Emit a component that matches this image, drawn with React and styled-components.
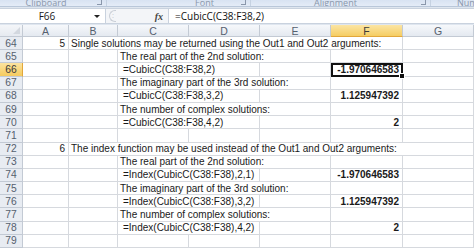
import React from 'react';
import styled, { createGlobalStyle } from 'styled-components';

const GlobalStyle = createGlobalStyle`
    html, body {
        margin: 0;
        padding: 0;
        background: #ffffff;
        overflow: hidden;
    }
    body {
        font-family: "Liberation Sans", Arial, sans-serif;
    }
`;

const GRID = '#d6d9de';
const HEAD_LINE = '#c3cad4';

const Window = styled.div`
    width: 474px;
    height: 248px;
    overflow: hidden;
    display: flex;
    flex-direction: column;
    background: #dfe6ef;
`;

const RibbonLabels = styled.div`
    display: flex;
    height: 8px;
    overflow: hidden;
    background: linear-gradient(#d8e3f2, #e4ecf7);
    border-bottom: 1px solid #b9c7d9;
`;

const Group = styled.div`
    position: relative;
    width: ${(props) => props.$width}px;
    flex: none;
    border-right: 1px solid #c6d2e2;
    box-sizing: border-box;
    text-align: ${(props) => (props.$left ? 'left' : 'center')};
    font-family: "Open Sans", "Liberation Sans", sans-serif;
    font-size: 9px;
    line-height: 9px;
    color: #8a97ab;
`;

const GroupLabel = styled.span`
    display: block;
    margin-top: -2px;
    position: relative;
    left: ${(props) => props.$shift || 0}px;
`;

const Launcher = styled.span`
    position: absolute;
    right: 4px;
    top: 0;
    width: 4px;
    height: 4px;
    border-right: 1px solid #8a97ab;
    border-bottom: 1px solid #8a97ab;
`;

const FormulaBar = styled.div`
    display: flex;
    align-items: stretch;
    height: 18px;
    margin-top: 1px;
    background: #f3f5f8;
    border-top: 1px solid #c9d2de;
    border-bottom: 1px solid #c9d2de;
`;

const NameBox = styled.div`
    width: 106px;
    flex: none;
    display: flex;
    align-items: center;
    background: #ffffff;
    border-right: 1px solid #c9d2de;
    box-sizing: border-box;
    font-family: "Open Sans", "Liberation Sans", sans-serif;
    font-size: 10px;
    color: #1a1a1a;
`;

const NameText = styled.span`
    flex: 1;
    text-align: center;
`;

const Arrow = styled.span`
    width: 0;
    height: 0;
    margin-right: 5px;
    border-left: 3px solid transparent;
    border-right: 3px solid transparent;
    border-top: 3px solid #222;
`;

const Splitter = styled.div`
    width: 62px;
    flex: none;
    display: flex;
    align-items: center;
    justify-content: space-between;
    padding: 0 5px 0 3px;
    box-sizing: border-box;
`;

const Grip = styled.span`
    width: 7px;
    height: 12px;
    border: 1px solid #c9ced6;
    border-right: none;
    border-radius: 7px 0 0 7px;
    box-sizing: border-box;
    font-size: 7px;
    line-height: 10px;
    color: #b0b6bf;
    text-align: center;
`;

const Fx = styled.span`
    font-family: "Liberation Serif", serif;
    font-style: italic;
    font-weight: bold;
    font-size: 10px;
    color: #444;
`;

const FormulaInput = styled.div`
    flex: 1;
    display: flex;
    align-items: center;
    padding-left: 6px;
    background: #ffffff;
    border-left: 1px solid #c9d2de;
    font-family: "Open Sans", "Liberation Sans", sans-serif;
    font-size: 10px;
    color: #111;
`;

const Sheet = styled.div`
    margin-top: 1px;
    display: grid;
    grid-template-columns: 23px 46px 49px 71px 71px 71px 72px 71px;
    grid-template-rows: 12px;
    grid-auto-rows: 13.2px;
    background: #ffffff;
`;

const Corner = styled.div`
    position: relative;
    background: linear-gradient(#f4f6f9, #e6eaf0);
    border-right: 1px solid ${HEAD_LINE};
    border-bottom: 1px solid ${HEAD_LINE};
    box-sizing: border-box;
    &::after {
        content: '';
        position: absolute;
        right: 2px;
        bottom: 2px;
        border-left: 7px solid transparent;
        border-bottom: 7px solid #d3d8df;
    }
`;

const ColHead = styled.div`
    display: flex;
    align-items: center;
    justify-content: center;
    font-size: 10.5px;
    color: ${(props) => (props.$active ? '#3b3b3b' : '#55606e')};
    background: ${(props) =>
        props.$active ? 'linear-gradient(#fbe5a4, #f6cd62)' : 'linear-gradient(#f6f8fb, #e4e9f0)'};
    border-right: 1px solid ${HEAD_LINE};
    border-bottom: 1px solid ${(props) => (props.$active ? '#e2a73a' : HEAD_LINE)};
    box-sizing: border-box;
`;

const RowHead = styled.div`
    display: flex;
    align-items: center;
    justify-content: center;
    font-size: 10.3px;
    color: ${(props) => (props.$active ? '#3b3b3b' : '#55606e')};
    background: ${(props) => (props.$active ? 'linear-gradient(#fbe3a0, #f6cb5e)' : '#e8ecf2')};
    border-right: 1px solid ${(props) => (props.$active ? '#e2a73a' : HEAD_LINE)};
    border-bottom: 1px solid ${HEAD_LINE};
    box-sizing: border-box;
`;

const Cell = styled.div`
    position: relative;
    grid-column: span ${(props) => props.$span || 1};
    display: flex;
    align-items: center;
    justify-content: ${(props) => (props.$right ? 'flex-end' : 'flex-start')};
    padding: 0 ${(props) => (props.$right ? 3 : 0)}px 0 ${(props) => (props.$indent ? 5 : 2)}px;
    border-right: 1px solid ${GRID};
    border-bottom: 1px solid ${GRID};
    box-sizing: border-box;
    white-space: nowrap;
    overflow: hidden;
    font-size: 10px;
    font-weight: ${(props) => (props.$bold ? 'bold' : 'normal')};
    color: #1a1a1a;
    ${(props) => props.$selected && `
        outline: 2px solid #111;
        outline-offset: -2px;
        overflow: visible;
    `}
`;

const FillHandle = styled.span`
    position: absolute;
    right: -3px;
    bottom: -3px;
    width: 4px;
    height: 4px;
    background: #111;
    border: 1px solid #fff;
    z-index: 2;
`;

const columns = ['A', 'B', 'C', 'D', 'E', 'F', 'G'];

const text = (t, span) => ({ t, span });
const formula = (t) => ({ t, span: 2, indent: true });
const num = (t, selected) => ({ t, right: true, bold: true, selected });
const empty = (n = 1) => Array.from({ length: n }, () => ({ t: '' }));

const solutionRows = (start, fn, args, selected) => [
    [start, [...empty(2), text('The real part of the 2nd solution:', 3), ...empty(2)]],
    [start + 1, [...empty(2), formula(fn(args[0])), ...empty(1), num('-1.970646583', selected), ...empty(1)]],
    [start + 2, [...empty(2), text('The imaginary part of the 3rd solution:', 3), ...empty(2)]],
    [start + 3, [...empty(2), formula(fn(args[1])), ...empty(1), num('1.125947392'), ...empty(1)]],
    [start + 4, [...empty(2), text('The number of complex solutions:', 3), ...empty(2)]],
    [start + 5, [...empty(2), formula(fn(args[2])), ...empty(1), num('2'), ...empty(1)]],
];

const rows = [
    [64, [{ t: '5', right: true }, text('Single solutions may be returned using the Out1 and Out2 arguments:', 5), ...empty(1)]],
    ...solutionRows(65, (a) => `=CubicC(C38:F38,${a})`, ['2', '3,2', '4,2'], true),
    [71, empty(7)],
    [72, [{ t: '6', right: true }, text('The index function may be used instead of the Out1 and Out2 arguments:', 6)]],
    ...solutionRows(73, (a) => `=Index(CubicC(C38:F38),${a})`, ['2,1', '3,2', '4,2']),
    [79, empty(7)],
];

const ribbonGroups = [
    { label: 'Clipboard', width: 107, shift: -7 },
    { label: 'Font', width: 144, shift: 26 },
    { label: 'Alignment', width: 180, shift: -5 },
    { label: 'Number', width: 90, shift: 26, left: true, noLauncher: true },
];

const App = () => {
    return (
        <>
            <GlobalStyle />
            <Window>
                <RibbonLabels>
                    {ribbonGroups.map((g) => (
                        <Group key={g.label} $width={g.width} $left={g.left}>
                            <GroupLabel $shift={g.shift}>{g.label}</GroupLabel>
                            {!g.noLauncher && <Launcher />}
                        </Group>
                    ))}
                </RibbonLabels>
                <FormulaBar>
                    <NameBox>
                        <NameText>F66</NameText>
                        <Arrow />
                    </NameBox>
                    <Splitter>
                        <Grip>:</Grip>
                        <Fx>fx</Fx>
                    </Splitter>
                    <FormulaInput>=CubicC(C38:F38,2)</FormulaInput>
                </FormulaBar>
                <Sheet>
                    <Corner />
                    {columns.map((c) => (
                        <ColHead key={c} $active={c === 'F'}>
                            {c}
                        </ColHead>
                    ))}
                    {rows.map(([n, cells]) => (
                        <React.Fragment key={n}>
                            <RowHead $active={n === 66}>{n}</RowHead>
                            {cells.map((c, i) => (
                                <Cell
                                    key={i}
                                    $span={c.span}
                                    $right={c.right}
                                    $bold={c.bold}
                                    $indent={c.indent}
                                    $selected={c.selected}
                                >
                                    {c.t}
                                    {c.selected && <FillHandle />}
                                </Cell>
                            ))}
                        </React.Fragment>
                    ))}
                </Sheet>
            </Window>
        </>
    );
};

export default App;
